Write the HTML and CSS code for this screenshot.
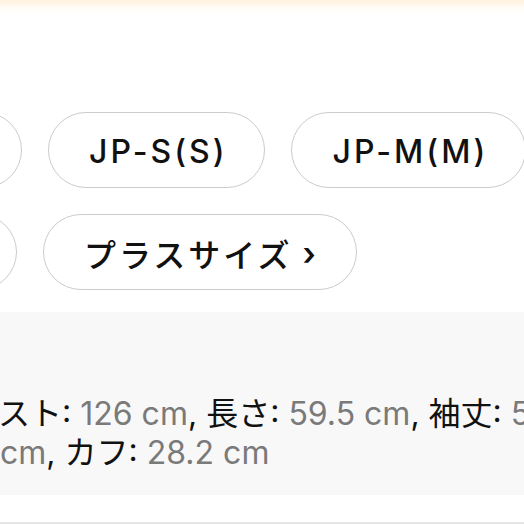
FILE: index.html
```html
<!DOCTYPE html>
<html lang="ja">
<head>
<meta charset="utf-8">
<link rel="stylesheet" href="styles.css">
</head>
<body>
<div class="topband"></div>
<section class="sizes">
  <div class="row">
    <button class="pill pill-hidden-a">JP-XS(XS)</button>
    <button class="pill">JP-S(S)</button>
    <button class="pill">JP-M(M)</button>
  </div>
  <div class="row">
    <button class="pill pill-hidden-b">JP-XL(XL)</button>
    <button class="pill pill-jp">プラスサイズ<span class="chev">›</span></button>
  </div>
</section>
<section class="measure">
  <p class="mtext"><span class="lbl">バスト: </span><span class="val">126 cm</span><span class="lbl">, 長さ: </span><span class="val">59.5 cm</span><span class="lbl">, 袖丈: </span><span class="val">5</span><br><span class="val">cm</span><span class="lbl">, カフ: </span><span class="val">28.2 cm</span></p>
</section>
<div class="bottomline"></div>
</body>
</html>
```

FILE: styles.css
```css
html, body {
  margin: 0;
  padding: 0;
  width: 524px;
  height: 524px;
  overflow: hidden;
  background: #ffffff;
  font-family: Inter, "Noto Sans CJK JP", sans-serif;
  color: #111111;
}

.topband {
  height: 16px;
  background: linear-gradient(to bottom, #fff2df 0px, #fff5e8 4px, #fffcf7 7px, #fffffe 16px);
}

.sizes {
  padding-top: 96px;
  margin-left: -218px;
  display: flex;
  flex-direction: column;
  gap: 26px;
}

.row {
  display: flex;
  gap: 26px;
}

.pill {
  flex: none;
  box-sizing: border-box;
  height: 76px;
  padding: 2px 37px 0 40px;
  display: flex;
  align-items: center;
  justify-content: center;
  border: 1px solid #cbcbcb;
  border-radius: 999px;
  background: #ffffff;
  font-family: Inter, "Noto Sans CJK JP", sans-serif;
  font-size: 32px;
  font-weight: 500;
  letter-spacing: 3px;
  color: #111111;
  white-space: nowrap;
}

.pill-hidden-a {
  width: 240px;
}

.pill-hidden-b {
  width: 235px;
}

.chev {
  margin-left: 10px;
  font-weight: 600;
}

.measure {
  margin-top: 22px;
  background: #f8f8f8;
  padding: 82px 0 23px;
}

.mtext {
  margin: 0;
  font-size: 32px;
  line-height: 39px;
  white-space: nowrap;
  text-indent: -34px;
}

.lbl {
  color: #111111;
}

.val {
  color: #7a7a7a;
}

.bottomline {
  margin-top: 27px;
  height: 2px;
  background: #e6e6e6;
}
```
